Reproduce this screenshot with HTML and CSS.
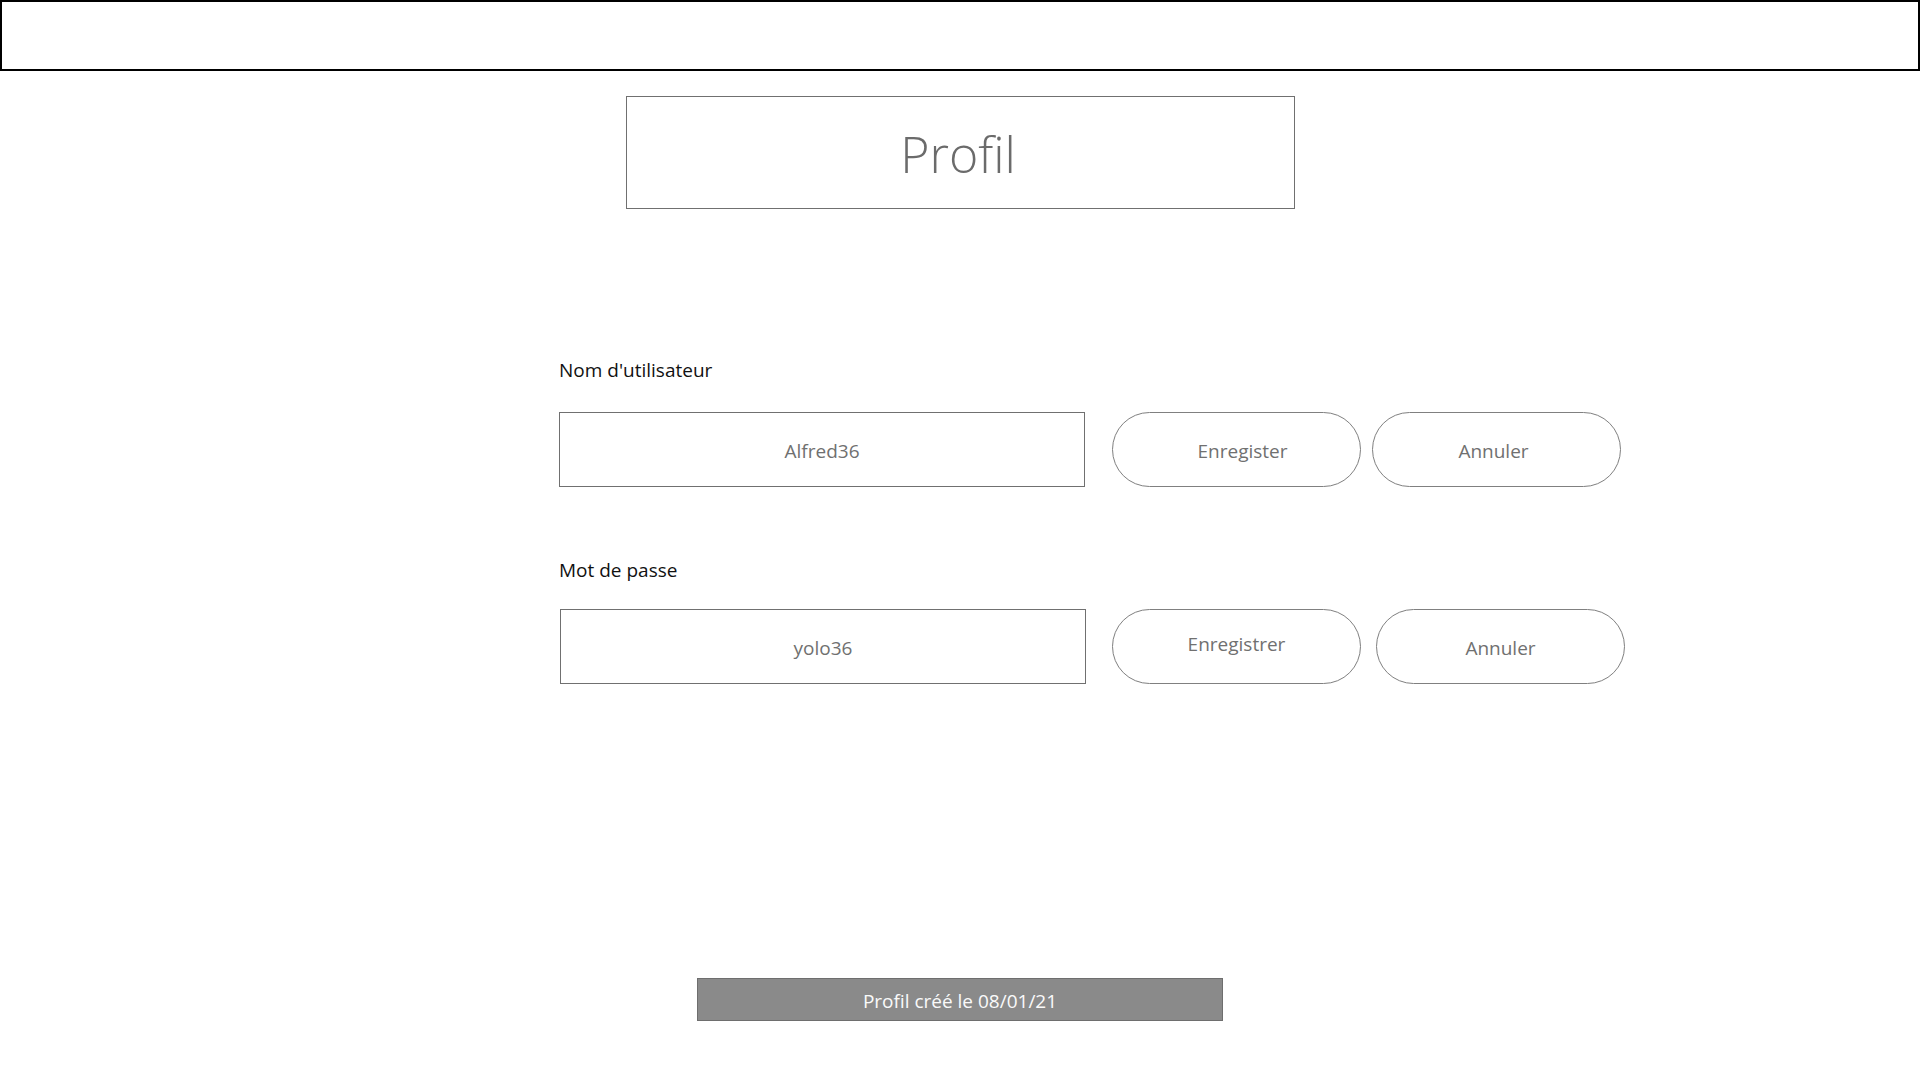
FILE: index.html
```html
<!DOCTYPE html>
<html lang="fr">
<head>
<meta charset="utf-8">
<title>Profil</title>
<link rel="stylesheet" href="styles.css">
</head>
<body>
<header class="topbar"></header>
<main class="page">
  <div class="title-box"><h1 class="title">Profil</h1></div>
  <form class="form">
    <div class="field field-user">
      <label class="label">Nom d'utilisateur</label>
      <div class="row">
        <div class="input">Alfred36</div>
        <button type="button" class="pill pill-save">Enregister</button>
        <button type="button" class="pill pill-cancel">Annuler</button>
      </div>
    </div>
    <div class="field field-pass">
      <label class="label">Mot de passe</label>
      <div class="row">
        <div class="input">yolo36</div>
        <button type="button" class="pill pill-save pill-raised">Enregistrer</button>
        <button type="button" class="pill pill-cancel pill-cancel2">Annuler</button>
      </div>
    </div>
  </form>
  <div class="footer-note">Profil créé le 08/01/21</div>
</main>
</body>
</html>
```
FILE: styles.css
```css
* { box-sizing: border-box; }
html, body { margin: 0; padding: 0; background: #ffffff; }
body {
  font-family: "Open Sans", "Noto Sans", "Liberation Sans", sans-serif;
  width: 1920px;
  height: 1080px;
  overflow: hidden;
}
.topbar {
  height: 71px;
  border: 2px solid #000000;
  background: #ffffff;
}
.page {
  display: flex;
  flex-direction: column;
}
.title-box {
  width: 669px;
  height: 113px;
  margin: 25px auto 0 626px;
  border: 1px solid #707070;
  display: flex;
  align-items: center;
  justify-content: center;
}
.title {
  margin: 0;
  font-weight: 300;
  font-size: 50px;
  color: #6b6b6b;
  line-height: 1;
  padding: 3px 5px 0 0;
}
.form {
  margin: 149px 0 0 559px;
  display: flex;
  flex-direction: column;
}
.field-pass { margin-top: 71px; }
.label {
  display: block;
  font-size: 19px;
  line-height: 24px;
  color: #111111;
  height: 24px;
}
.field-user .label { margin-bottom: 30px; }
.field-pass .label { margin-bottom: 27px; }
.row {
  display: flex;
  align-items: flex-start;
}
.input {
  width: 526px;
  height: 75px;
  border: 1px solid #707070;
  display: flex;
  align-items: center;
  justify-content: center;
  font-size: 19px;
  color: #707070;
  padding-top: 2px;
}
.field-pass .input { margin-left: 1px; width: 526px; }
.pill {
  height: 75px;
  width: 249px;
  border: 1px solid #808080;
  border-radius: 38px;
  background: #ffffff;
  font-family: inherit;
  font-size: 19px;
  color: #707070;
  display: flex;
  align-items: center;
  justify-content: center;
  padding: 2px 0 0 0;
}
.pill-save { margin-left: 27px; padding-left: 12px; }
.field-pass .pill-save { margin-left: 26px; padding-left: 0; }
.pill-raised { padding-top: 0; padding-bottom: 6px; }
.pill-cancel { margin-left: 11px; padding-right: 6px; }
.pill-cancel2 { margin-left: 15px; padding-right: 0; padding-top: 3px; padding-bottom: 0; }
.footer-note {
  width: 526px;
  height: 43px;
  margin: 294px auto 0 697px;
  background: #8a8a8a;
  border: 1px solid #6e6e6e;
  color: #fafafa;
  font-size: 19px;
  display: flex;
  align-items: center;
  justify-content: center;
  padding-top: 2px;
}
```
